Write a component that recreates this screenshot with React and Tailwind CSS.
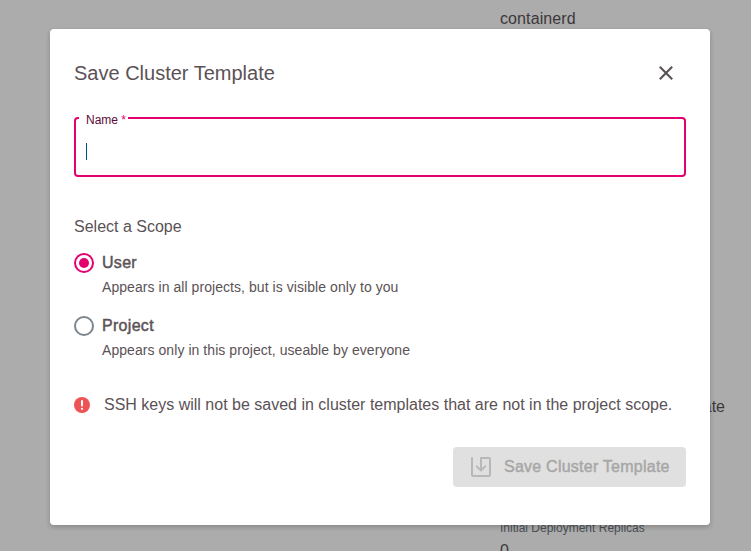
import React from "react";

function DetailsPage() {
  return (
    <div className="flex h-[551px] flex-col overflow-hidden bg-[#acacac] pl-[500px] text-base leading-6 text-[#3c383a]">
      <div className="-mt-[12px] h-4 text-xs leading-4 text-[#4b5055]">Container Runtime</div>
      <div className="mt-[3px] tracking-[0.1px]">containerd</div>
      <div className="mt-[364px] w-[225px] whitespace-nowrap text-right">cluster-template</div>
      <div className="mt-[101px] text-xs leading-4 text-[#4b5055]">Initial Deployment Replicas</div>
      <div className="mt-[3px]">0</div>
    </div>
  );
}

function CloseIcon() {
  return (
    <svg width="14" height="14" viewBox="0 0 14 14" fill="none" stroke="#5b5256" strokeWidth="2.1">
      <path d="M.8.8 13.2 13.2M13.2.8.8 13.2" />
    </svg>
  );
}

function SaveIcon() {
  return (
    <svg width="20" height="20" viewBox="0 0 20 20" fill="none" stroke="#b8b8b8" strokeWidth="2" strokeLinecap="round" strokeLinejoin="round">
      <path d="M1 1v17q0 1 1 1h16q1 0 1-1V2q0-1-1-1H10v12.6M5.8 9.4 10 13.6l4.2-4.2" />
    </svg>
  );
}

function ScopeOption({ label, text, checked }) {
  return (
    <label className="flex gap-2">
      <span
        className={
          checked
            ? "mt-[2px] flex size-5 items-center justify-center rounded-full border-2 border-[#e4006e]"
            : "mt-[2px] flex size-5 items-center justify-center rounded-full border-2 border-[#7d858d]"
        }
      >
        {checked && <span className="size-[10px] rounded-full bg-[#e4006e]" />}
      </span>
      <span className="flex flex-col">
        <span className="text-base leading-6 tracking-[0.3px] [-webkit-text-stroke:0.45px_#5b5256]">{label}</span>
        <span className="mt-[2px] text-sm leading-5 tracking-[0.06px]">{text}</span>
      </span>
    </label>
  );
}

export default function App() {
  return (
    <div className="relative h-[551px] w-[751px] overflow-hidden font-['Liberation_Sans',Arial,sans-serif]">
      <DetailsPage />
      <div className="absolute inset-0 flex items-start pt-[29px] pl-[50px]">
        <div className="flex h-[496px] w-[660px] flex-col rounded bg-white px-6 text-[#5b5256] shadow-[0_2px_5px_rgba(0,0,0,0.22)]">
          <div className="mt-8 flex h-6 items-center justify-between pr-[13px]">
            <h2 className="text-xl leading-6">Save Cluster Template</h2>
            <CloseIcon />
          </div>
          <fieldset className="mt-[25px] h-[67px] w-[612px] rounded border-2 border-[#e4006e] pl-[3px]">
            <legend className="flex h-4 w-[49px] pt-[2px] pl-[7px] text-xs leading-4 text-[#5e0a38]">
              Name&nbsp;<span className="text-[#e4006e]">*</span>
            </legend>
            <div className="mt-[17px] ml-[7px] h-[17px] w-px bg-[#00527e]" />
          </fieldset>
          <div className="mt-[38px] text-base leading-6">Select a Scope</div>
          <div className="mt-3 flex flex-col gap-[17px]">
            <ScopeOption label="User" text="Appears in all projects, but is visible only to you" checked />
            <ScopeOption label="Project" text="Appears only in this project, useable by everyone" />
          </div>
          <div className="mt-[33px] flex items-center">
            <svg width="16" height="16" viewBox="0 0 16 16">
              <circle cx="8" cy="8" r="8" fill="#ee5355" />
              <path d="M8 4v4.6" stroke="white" strokeWidth="2" strokeLinecap="round" />
              <circle cx="8" cy="11.8" r="1.1" fill="white" />
            </svg>
            <span className="ml-[14px] whitespace-nowrap text-base leading-6">
              SSH keys will not be saved in cluster templates that are not in the project scope.
            </span>
          </div>
          <button className="mt-[30px] flex h-10 w-[233px] items-center self-end rounded bg-[#e0e0e0] pl-[18px] text-[#a7a7a7]">
            <SaveIcon />
            <span className="ml-[13px] whitespace-nowrap text-base leading-6 tracking-[0.24px] [-webkit-text-stroke:0.45px_#a7a7a7]">Save Cluster Template</span>
          </button>
        </div>
      </div>
    </div>
  );
}
